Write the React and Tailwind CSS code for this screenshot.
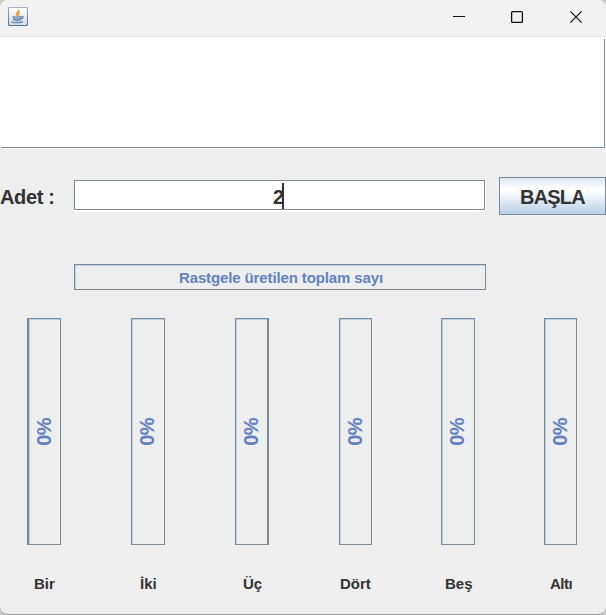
const bars = [
  { name: "Bir", bar: "ml-[27px] w-[34px] border-l-2", label: "ml-[34px] w-[22px]" },
  { name: "İki", bar: "ml-[70px] w-[34px]", label: "ml-[84px] w-[16px]" },
  { name: "Üç", bar: "ml-[70px] w-[34px] border-r-2", label: "ml-[87px] w-[19px]" },
  { name: "Dört", bar: "ml-[70px] w-[33px]", label: "ml-[78px] w-[31px]" },
  { name: "Beş", bar: "ml-[69px] w-[34px]", label: "ml-[74px] w-[27px]" },
  { name: "Altı", bar: "ml-[69px] w-[33px]", label: "ml-[78px] w-[22px] tracking-[-0.5px]" },
];

function TitleBar() {
  return (
    <header className="flex h-[37px] shrink-0 items-start border-b border-[#e7e7e7] bg-[#f2f2f2]">
      <svg className="mt-[7px] ml-2" width="20" height="19" viewBox="0 0 20 19" fill="none">
        <defs>
          <linearGradient id="tile" x1="0" y1="0" x2="0" y2="1">
            <stop stopColor="#ffffff" />
            <stop offset="1" stopColor="#d5dde5" />
          </linearGradient>
          <linearGradient id="edge" x1="0" y1="0" x2="0" y2="1">
            <stop stopColor="#9fb3c4" />
            <stop offset="1" stopColor="#58758f" />
          </linearGradient>
        </defs>
        <rect x=".5" y=".5" width="19" height="18" rx="1.5" fill="url(#tile)" stroke="url(#edge)" strokeWidth="1.2" />
        <path d="M10.7 3c.7 1.7-2.7 2.500-2.300 4.200.1.800 1 1.200 1.300 1.900M11.900 5.300c-1.700.8-2.200 1.400-1.400 2.400.4.600.2 1-.3 1.500" stroke="#eb9c4c" strokeWidth="1.600" />
        <path d="M4.500 9.500c2 .8 6.500.7 8.800 0M5 10.500l1 2.500c1.500.7 4.300.7 6 0l.8-2.500" fill="#8fa9c5" stroke="#6488af" strokeWidth="1.200" />
        <path d="M13.300 9.700c2.700-.8 2.300 1.900-.7 2.300M3.700 14.500c-.9 1.500 8.500 1.700 11.200.1" stroke="#6488af" strokeWidth="1.300" />
      </svg>
      <svg className="mt-[9px] ml-[424px]" width="132" height="16" viewBox="0 0 132 16" fill="none" stroke="#111">
        <path d="M1 7.500h12" />
        <rect x="59.600" y="2.600" width="10.800" height="10.800" rx="1" strokeWidth="1.300" />
        <path d="M118.300 2.300l11.400 11.400M129.700 2.300L118.300 13.700" strokeWidth="1.200" />
      </svg>
    </header>
  );
}

function Field() {
  return (
    <div className="mt-[3px] h-[32px] w-[412px] bg-white">
      <div className="flex h-[30px] w-[411px] border border-[#7a8a99] bg-white pt-[2px] pl-[198px]">
        <span className="w-[9px] text-[20px] leading-[28px] tracking-[-1px]">2</span>
        <span className="z-10 h-[26px] w-[2px] bg-[#333]" />
      </div>
    </div>
  );
}

export default function App() {
  return (
    <div className="h-[615px] w-[606px] overflow-hidden bg-[#c9c9c9]">
      <div className="flex h-[615px] w-[606px] flex-col overflow-hidden rounded-[8px] border-b border-[#979797] bg-[#eeeeee] font-['Liberation_Sans',Arial,sans-serif] font-bold text-[#333333]">
        <TitleBar />
        <div className="flex h-[112px] shrink-0 bg-white pr-px pb-px">
          <div className="mt-[2px] ml-px h-[109px] w-[604px] border-r border-b border-[#7a8a99]" />
        </div>
        <div className="mt-[28px] flex h-[38px] shrink-0 items-start">
          <span className="w-[74px] shrink-0 text-[20px] leading-[40px] tracking-[-0.35px] whitespace-nowrap">Adet :</span>
          <Field />
          <button className="ml-[13px] h-[38px] w-[107px] shrink-0 border border-[#7a8a99] bg-[linear-gradient(#dde8f3_0%,#ffffff_30%,#ffffff_36%,#b8cfe5_100%)] pt-[2px] text-[20px] leading-[30px] tracking-[-0.8px]">
            BAŞLA
          </button>
        </div>
        <div className="mt-[49px] ml-[74px] flex h-[26px] w-[412px] shrink-0 items-center justify-center border border-[#7a8a99] pt-[2px] pl-[2px] text-[15px] tracking-[-0.12px] text-[#6382bf] shadow-[inset_1px_1px_#b8cfe5]">
          Rastgele üretilen toplam sayı
        </div>
        <div className="mt-[28px] flex h-[227px] shrink-0">
          {bars.map((b) => (
            <div key={b.name} className={"flex h-[227px] shrink-0 items-center justify-center border border-[#7a8a99] pr-[2px] text-[20px] text-[#6382bf] shadow-[inset_1px_1px_#b8cfe5] " + b.bar}>
              <span className="-rotate-90 leading-[24px] tracking-[-0.7px]">0%</span>
            </div>
          ))}
        </div>
        <div className="mt-[29px] flex h-[20px] shrink-0">
          {bars.map((b) => (
            <span key={b.name} className={"shrink-0 text-[15px] leading-[20px] whitespace-nowrap " + b.label}>
              {b.name}
            </span>
          ))}
        </div>
      </div>
    </div>
  );
}
